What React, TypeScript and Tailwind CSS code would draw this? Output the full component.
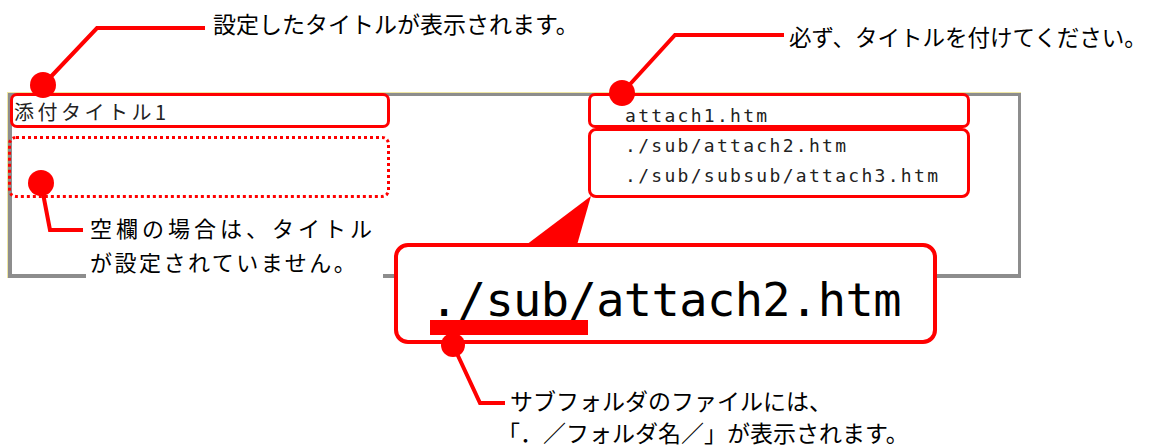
const red = "#ff0000"

export default function App() {
  return (
    <div className="relative w-[1150px] h-[448px] overflow-hidden bg-white text-black font-['Noto_Sans_CJK_JP',sans-serif]">
      {/* list panel */}
      <div className="ml-[7px] mt-[92px] w-[1014px] h-[186px] border-t border-l border-[#efe6a2]">
        <div className="h-full grid grid-cols-[611px_1fr] content-start pt-[5px] pl-[2px] border-t-[3px] border-l-[4px] border-r-[3px] border-b-[4px] border-[#8d8d8d]">
          <div className="text-[20px] leading-[22px] tracking-[3.5px] text-[#222]">添付タイトル1</div>
          <div className="font-['DejaVu_Sans_Mono',monospace] text-[18px] leading-[30px] tracking-[2.3px] text-[#222]">
            <div>attach1.htm</div>
            <div>./sub/attach2.htm</div>
            <div>./sub/subsub/attach3.htm</div>
          </div>
        </div>
      </div>

      {/* callout labels */}
      <div className="absolute left-[213px] top-[6px] text-[23px] leading-[34px] whitespace-nowrap">設定したタイトルが表示されます。</div>
      <div className="absolute left-[789px] top-[19px] text-[22.5px] leading-[34px] whitespace-nowrap">必ず、タイトルを付けてください。</div>
      <div className="absolute left-[86px] top-[210px] w-[297px] h-[70px] bg-white pl-[4px] text-[22px] leading-[34px] whitespace-nowrap">
        <div className="tracking-[4px]">空欄の場合は、タイトル</div>
        <div className="tracking-[2.5px]">が設定されていません。</div>
      </div>
      <div className="absolute left-[497px] top-[384px] text-[23px] leading-[32px] whitespace-nowrap">
        <div className="pl-[13px]">サブフォルダのファイルには、</div>
        <div>「．／フォルダ名／」が表示されます。</div>
      </div>

      {/* highlight frames */}
      <div className="absolute left-[10px] top-[93px] w-[380px] h-[35px] rounded-[7px] border-[3px] border-[#ff0000]" />
      <div className="absolute left-[8px] top-[136px] w-[382px] h-[62px] rounded-[8px] border-[3px] border-dotted border-[#ff0000]" />
      <div className="absolute left-[588px] top-[93px] w-[382px] h-[35px] rounded-[7px] border-[3px] border-[#ff0000]" />
      <div className="absolute left-[588px] top-[128px] w-[382px] h-[70px] rounded-[8px] border-[3px] border-[#ff0000]" />

      {/* zoomed path */}
      <div className="absolute left-[394px] top-[243px] w-[543px] h-[101px] rounded-[14px] border-4 border-[#ff0000] bg-white pt-[29px] pl-[32px] font-['DejaVu_Sans_Mono',monospace] text-[47px] leading-[47px] tracking-[-0.6px] whitespace-nowrap">
        ./sub/attach2.htm
      </div>

      <svg className="absolute inset-0 pointer-events-none" width="1150" height="448" viewBox="0 0 1150 448">
        <g fill="none" stroke={red} strokeWidth="4" strokeLinejoin="miter">
          <polyline points="205,28 97,28 43,85" />
          <polyline points="784,35 675,35 622,93" />
          <polyline points="41,183 50,230 83,230" />
          <polyline points="453,345 480,403 505,403" />
        </g>
        <g fill={red}>
          <circle cx="43" cy="85" r="13" />
          <circle cx="622" cy="93" r="13" />
          <circle cx="41" cy="183" r="13" />
          <polygon points="591,196 526,245 577,245" />
          <rect x="430" y="320" width="158" height="15" />
          <circle cx="453" cy="345" r="12" />
        </g>
      </svg>
    </div>
  )
}
